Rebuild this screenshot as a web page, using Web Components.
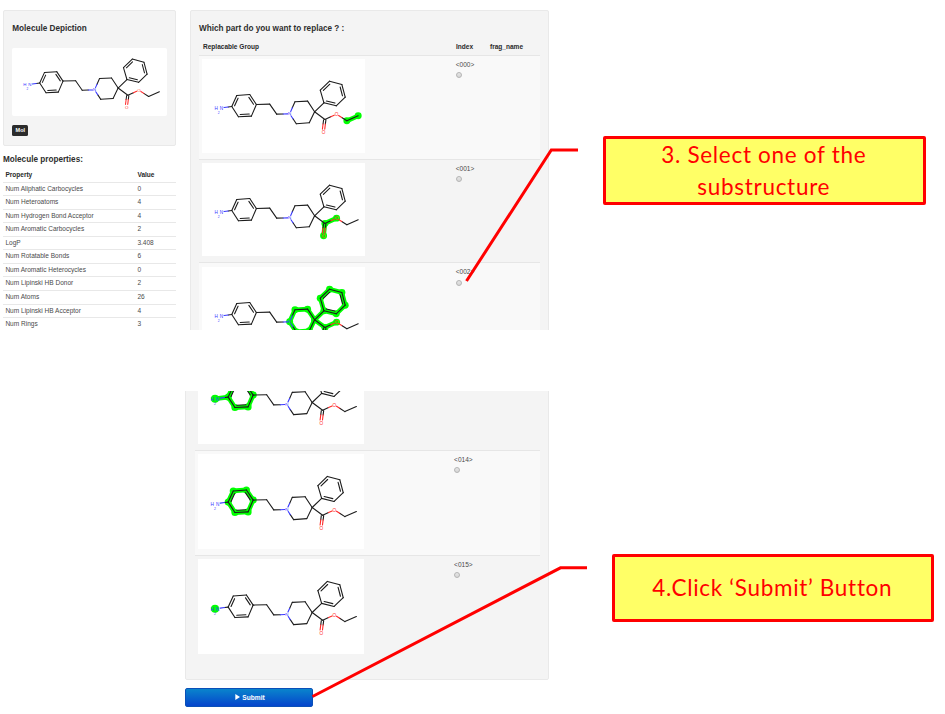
<!DOCTYPE html>
<html lang="en"><head><meta charset="utf-8"><title>Replace a substructure</title>
<style>
html,body{margin:0;padding:0;background:#fff;overflow:hidden}
</style></head><body>
<mol-app></mol-app>
<script>
const define = (name, css, html) => customElements.define(name, class extends HTMLElement {
  connectedCallback() {
    if (this.shadowRoot) return;
    const root = this.attachShadow({ mode: 'open' });
    root.innerHTML = '<style>*{box-sizing:border-box}' + css + '</style>' + (typeof html === 'function' ? html(this) : html);
  }
});

/* Atom positions on a 490 x 280 canvas */
const A = {
  n0:[48,145], a1:[87,140], a2:[102,107], a3:[141,104], a4:[161,134], a5:[146,169], a6:[107,171],
  c7:[201,133], c8:[222,163], n1:[261,162], p2:[277,126], p3:[315,124], p4:[336,156], p5:[320,189], p6:[281,192],
  b1:[364,129], b2:[353,91], b3:[381,64], b4:[418,74], b5:[428,112], b6:[401,138],
  e1:[367,179], o1:[363,216], o2:[402,163], e2:[433,183], e3:[467,168]
};
const AR = 'a1-a2 a2-a3 a3-a4 a4-a5 a5-a6 a6-a1';
const HL = {
  ethyl:'e2-e3',
  ester:'e1-o1 e1-o2',
  core:'n1-p2 p2-p3 p3-p4 p4-p5 p5-p6 p6-n1 p4-b1 b1-b2 b2-b3 b3-b4 b4-b5 b5-b6 b6-b1 p4-e1 e1-o1 e1-o2',
  aniline:'n0-a1 ' + AR,
  arene:AR,
  amine:'n0-n0'
};
const pt = (p, q, t) => [p[0] + (q[0]-p[0])*t, p[1] + (q[1]-p[1])*t];
const ln = (p, q, c='#1c1c1c') => `<line x1="${p[0]}" y1="${p[1]}" x2="${q[0]}" y2="${q[1]}" stroke="${c}"/>`;
function molecule(hl) {
  let s = '';
  if (HL[hl]) {
    const seen = new Set();
    s += '<g stroke-width="14" stroke-linecap="round">';
    for (const b of HL[hl].split(' ')) {
      const [i, j] = b.split('-');
      s += ln(A[i], A[j], '#0f0'); seen.add(i); seen.add(j);
    }
    s += '</g>';
    for (const i of seen) s += `<circle cx="${A[i][0]}" cy="${A[i][1]}" r="${i === 'n0' ? 12 : 10.5}" fill="#0f0"/>`;
  }
  s += '<g stroke-width="3.3" stroke-linecap="round">';
  const plain = (AR + ' a4-c7 c7-c8 p2-p3 p3-p4 p4-p5 p5-p6 p4-b1 b1-b2 b2-b3 b3-b4 b4-b5 b5-b6 b6-b1 p4-e1 e2-e3').split(' ');
  for (const b of plain) { const [i, j] = b.split('-'); s += ln(A[i], A[j]); }
  const inner = (i, j, c) => {
    const f = p => pt(p, c, .21), p = f(A[i]), q = f(A[j]);
    s += ln(pt(p, q, .06), pt(p, q, .94));
  };
  const ac = [124,138], bc = [391,101];
  inner('a1','a2',ac); inner('a3','a4',ac); inner('a5','a6',ac);
  inner('b2','b3',bc); inner('b4','b5',bc); inner('b6','b1',bc);
  const half = (hx, c, x, t0, m=.5) => {
    const p = A[hx], q = A[x];
    s += ln(pt(p,q,m), q) + ln(pt(p,q,t0), pt(p,q,m), c);
  };
  const B = '#3737ff', R = '#ff2a2a';
  half('n0', B, 'a1', .4, .72);
  half('n1', B, 'c8', .15); half('n1', B, 'p2', .2); half('n1', B, 'p6', .2);
  half('o2', R, 'e1', .2); half('o2', R, 'e2', .2);
  for (const d of [-4, 3]) {
    const p = [363.5+d, 208], q = [367+d, 180], m = pt(p,q,.55);
    s += ln(m, q) + ln(p, m, R);
  }
  s += '</g>';
  const t = (x, y, v, c, z=15) => `<text x="${x}" y="${y}" font-size="${z}" fill="${c}">${v}</text>`;
  s += t(40,151,'H',B,14) + t(56,151,'N',B,14) + t(48,163,'2',B,10) + t(261,167,'N',B,13) + t(402,168,'O',R,14);
  /* the core row ends above its carbonyl label */
  if (hl !== 'core') s += t(363,222,'O',R,14);
  return s;
}
define('mol-image', ':host{display:block;background:#fff;width:163px;height:93.3px}svg{display:block;width:100%;height:100%}text{font-family:"Liberation Sans",Arial,sans-serif;text-anchor:middle}',
  el => `<svg viewBox="${el.getAttribute('view') || '-2.5 -2.5 490 280'}">${molecule(el.getAttribute('highlight'))}</svg>`);

define('well-panel', ':host{display:block;box-sizing:border-box;background:#f4f4f4;border:1px solid #e9e9e9;border-radius:2px}', '<slot></slot>');

define('props-table', `:host{display:block;font-size:6.54px;color:#4a4a4a}
 .r{display:grid;grid-template-columns:132px 1fr;padding-left:2.4px;height:13.56px;line-height:12.4px;border-top:1px solid #e8e8e8}
 .h{font-weight:bold;color:#2a2a2a;border:0;height:13.2px;line-height:14.4px}`,
 () => '<div class="r h"><span>Property</span><span>Value</span></div>' + [
  ['Num Aliphatic Carbocycles','0'],['Num Heteroatoms','4'],['Num Hydrogen Bond Acceptor','4'],['Num Aromatic Carbocycles','2'],['LogP','3.408'],
  ['Num Rotatable Bonds','6'],['Num Aromatic Heterocycles','0'],['Num Lipinski HB Donor','2'],['Num Atoms','26'],['Num Lipinski HB Acceptor','4'],['Num Rings','3']
 ].map(r => `<div class="r"><span>${r[0]}</span><span>${r[1]}</span></div>`).join(''));

define('group-row', `:host{display:grid;box-sizing:border-box;grid-template-columns:var(--cols,253px 1fr);padding:3.2px 0 0 3.4px;height:var(--rowh,103.7px);border-top:1px solid #e6e6e6;font-size:6.54px;color:#4a4a4a}
 :host([odd]){background:#f9f9f9}
 mol-image{width:var(--iw,163px);height:var(--ih,93.3px)}
 .i{padding:.7px 0 0 .4px;line-height:9px}
 .d{width:6px;height:6px;border-radius:50%;border:1px solid #b4b4b4;background:linear-gradient(#e6e6e6,#d6d6d6);margin:3.2px 0 0 .1px}`,
 el => `<mol-image highlight="${el.getAttribute('part')}"></mol-image>` + (el.hasAttribute('index') ? `<div class="i">&lt;${el.getAttribute('index')}&gt;<div class="d" role="radio"></div></div>` : ''));

define('submit-button', `:host{display:flex;box-sizing:border-box;align-items:center;justify-content:center;gap:2px;width:128px;height:18.5px;border-radius:2px;border:1px solid #0a50b8;background:linear-gradient(#0a84cc,#0545cc);color:#fff;font-weight:bold;font-size:6.6px;padding-left:2px}
 svg{width:5px;height:6px}`, '<svg viewBox="0 0 5 6"><path d="M.3 0 5 3 .3 6z" fill="#fff"/></svg><slot></slot>');

define('note-box', `:host{position:absolute;box-sizing:border-box;display:flex;align-items:center;justify-content:center;text-align:center;background:#ffff66;border:3px solid #f00;border-radius:2px;color:#f00;font:22.5px/32px Lato,sans-serif;letter-spacing:.7px;white-space:nowrap}
 ::slotted(span){margin-left:-1.5px}`, '<slot></slot>');

define('mol-app', `:host{display:block;position:relative;width:945px;height:714px;overflow:hidden;background:#fff;font-family:"Liberation Sans",Arial,sans-serif;color:#2a2a2a}
 .top{display:grid;grid-template-columns:173px 359px;column-gap:14px;padding:10px 0 0 3px;height:330px;overflow:hidden}
 h2{margin:0;font-size:8.18px;line-height:10px;font-weight:bold;color:#2e2e2e}
 .dep{height:135.5px;padding:13px 8.3px}
 .dep mol-image{width:154.3px;height:68.4px;margin-top:13.9px;border-radius:2px}
 .mol{display:block;width:16px;height:11px;margin-top:9px;background:#2b2b2b;border-radius:1.5px;color:#fff;font-weight:bold;font-size:5.5px;line-height:11px;text-align:center}
 .props h2{margin:9px 0 3.9px}
 .pick{height:400px;padding:12.9px 8px 0}
 .head{display:grid;grid-template-columns:253px 34px 1fr;padding:4px 0 0 4px;height:21.2px;font-size:6.54px;font-weight:bold;line-height:17px}
 .low{display:flex;flex-direction:column;justify-content:flex-end;margin:61px 0 0 185px;width:364px;height:288.5px;overflow:hidden}
 .rest{--rowh:104.9px;--iw:165.3px;--ih:94.5px;--cols:255.3px 1fr;flex:none;padding:20px 8.3px 18.7px 9px}
 submit-button{margin:8.5px 0 0 185px}
 svg{position:absolute;left:0;top:0}`,
 `<section class="top">
   <div>
    <well-panel class="dep"><h2>Molecule Depiction</h2><mol-image view="-1 29 490 217"></mol-image><span class="mol">Mol</span></well-panel>
    <div class="props"><h2>Molecule properties:</h2><props-table></props-table></div>
   </div>
   <well-panel class="pick"><h2>Which part do you want to replace ? :</h2>
    <div class="head"><span>Replacable Group</span><span>Index</span><span>frag_name</span></div>
    <group-row odd index="000" part="ethyl"></group-row>
    <group-row index="001" part="ester"></group-row>
    <group-row odd index="002" part="core"></group-row>
   </well-panel>
  </section>
  <section class="low"><well-panel class="rest">
    <group-row part="aniline"></group-row>
    <group-row odd index="014" part="arene"></group-row>
    <group-row index="015" part="amine"></group-row>
  </well-panel></section>
  <submit-button>Submit</submit-button>
  <svg width="945" height="714" fill="none" stroke="#f00" stroke-width="3"><path d="M466.500 281 551.300 150H578"/><path d="M312.500 696.500 560.500 567.800H587"/></svg>
  <note-box style="left:603px;top:136px;width:323px;height:69px"><span>3. Select one of the<br>substructure</span></note-box>
  <note-box style="left:612px;top:554px;width:322px;height:68px"><span>4.Click ‘Submit’ Button</span></note-box>`);
</script></body></html>
